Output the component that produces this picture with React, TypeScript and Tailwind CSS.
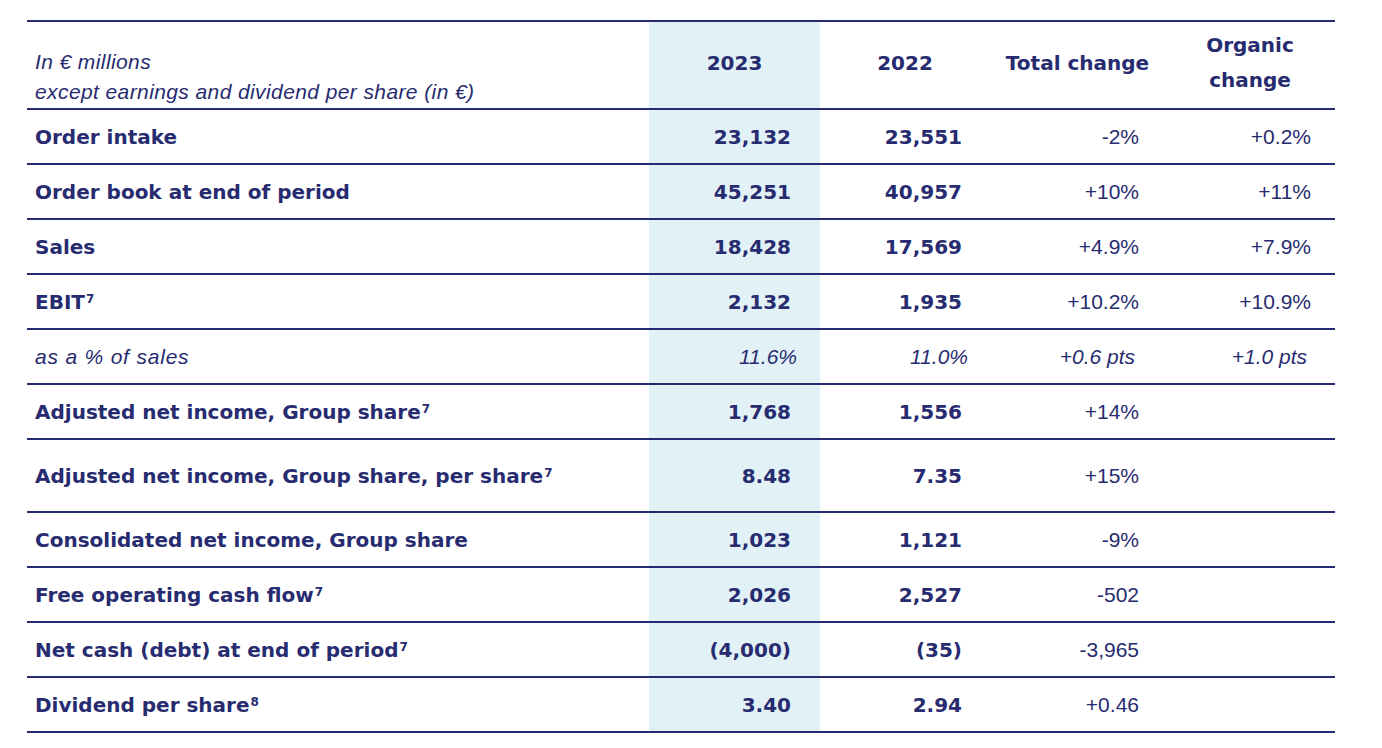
const rows = [
  { label: "Order intake", v23: "23,132", v22: "23,551", total: "-2%", organic: "+0.2%" },
  { label: "Order book at end of period", v23: "45,251", v22: "40,957", total: "+10%", organic: "+11%" },
  { label: "Sales", v23: "18,428", v22: "17,569", total: "+4.9%", organic: "+7.9%" },
  { label: "EBIT", sup: "7", v23: "2,132", v22: "1,935", total: "+10.2%", organic: "+10.9%" },
  { label: "as a % of sales", italic: true, v23: "11.6%", v22: "11.0%", total: "+0.6 pts", organic: "+1.0 pts" },
  { label: "Adjusted net income, Group share", sup: "7", v23: "1,768", v22: "1,556", total: "+14%" },
  { label: "Adjusted net income, Group share, per share", sup: "7", v23: "8.48", v22: "7.35", total: "+15%", tall: true },
  { label: "Consolidated net income, Group share", v23: "1,023", v22: "1,121", total: "-9%" },
  { label: "Free operating cash flow", sup: "7", v23: "2,026", v22: "2,527", total: "-502" },
  { label: "Net cash (debt) at end of period", sup: "7", v23: "(4,000)", v22: "(35)", total: "-3,965" },
  { label: "Dividend per share", sup: "8", v23: "3.40", v22: "2.94", total: "+0.46" },
];

const bold = "font-['DejaVu_Sans',sans-serif] font-bold text-[20px]";
const regular = "font-['Liberation_Sans',Arial,sans-serif] font-normal";
const light = `${regular} text-[21px]`;
const caption = `${regular} italic text-[21px] tracking-[0.4px]`;

export default function App() {
  return (
    <div className="min-h-[748px] bg-white pt-[20px] pl-[27px] text-[#272b6f]">
      <div className="w-[1308px] border-t-2 border-[#262a72]">
        {/* header */}
        <div className="grid h-[88px] grid-cols-[622px_171px_170px_175px_170px] border-b-2 border-[#262a72]">
          <div className={`flex flex-col justify-end pb-[1px] pl-[8px] leading-[30px] ${caption}`}>
            <span>In € millions</span>
            <span>except earnings and dividend per share (in €)</span>
          </div>
          <div className={`flex items-center justify-center bg-[#e2f1f5] pb-[4px] ${bold}`}>2023</div>
          <div className={`flex items-center justify-center pb-[4px] ${bold}`}>2022</div>
          <div className={`flex items-center justify-center pb-[4px] ${bold}`}>Total change</div>
          <div className={`flex items-center justify-center pb-[4px] text-center leading-[35px] ${bold}`}>
            Organic
            <br />
            change
          </div>
        </div>

        {rows.map((r) => (
          <div
            key={r.label}
            className={`grid grid-cols-[622px_171px_170px_175px_170px] border-b-2 border-[#262a72] ${r.tall ? "h-[73px]" : "h-[55px]"}`}
          >
            <div className={`flex items-center pl-[8px] ${r.italic ? `${caption} tracking-[0.8px]` : bold}`}>
              <span>
                {r.label}
                {r.sup && <sup className="ml-[1px] text-[12px]">{r.sup}</sup>}
              </span>
            </div>
            <div
              className={`flex items-center justify-end bg-[#e2f1f5] ${r.italic ? `pr-[23px] italic ${light}` : `pr-[29px] ${bold}`}`}
            >
              {r.v23}
            </div>
            <div className={`flex items-center justify-end ${r.italic ? `pr-[22px] italic ${light}` : `pr-[28px] ${bold}`}`}>
              {r.v22}
            </div>
            <div className={`flex items-center justify-end ${r.italic ? "pr-[30px] italic" : "pr-[26px]"} ${light}`}>
              {r.total}
            </div>
            <div className={`flex items-center justify-end ${r.italic ? "pr-[28px] italic" : "pr-[24px]"} ${light}`}>
              {r.organic}
            </div>
          </div>
        ))}
      </div>
    </div>
  );
}
